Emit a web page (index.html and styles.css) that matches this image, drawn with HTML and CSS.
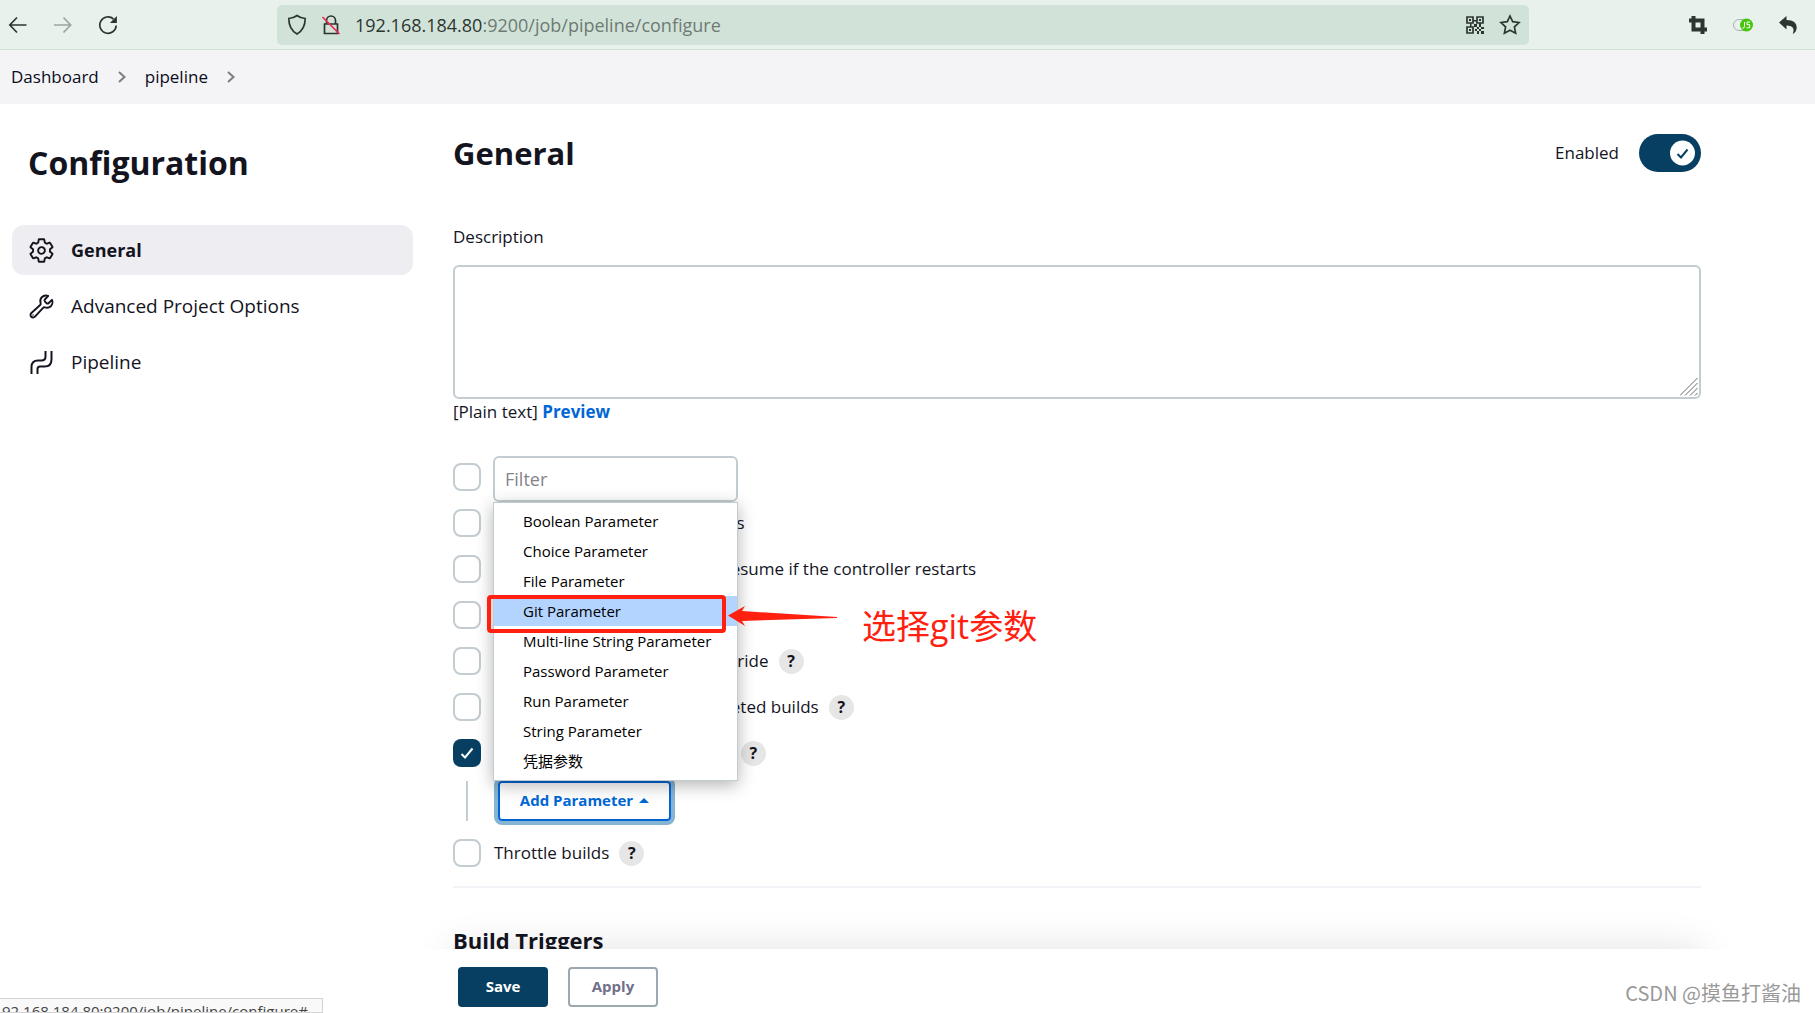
FILE: index.html
```html
<!DOCTYPE html>
<html lang="en">
<head>
<meta charset="utf-8">
<title>pipeline Config [Jenkins]</title>
<link rel="stylesheet" href="styles.css">
</head>
<body>
<div class="toolbar">
  <div class="tools nav-tools">
    <button type="button" aria-label="Back"><svg width="20" height="20" viewBox="0 0 20 20"><path d="M18.500 10H2M9 2.500 1.800 10 9 17.500"/></svg></button>
    <button type="button" aria-label="Forward" class="dim"><svg width="20" height="20" viewBox="0 0 20 20"><path d="M1 10h16.500M10.500 2.500 17.700 10l-7.200 7.500"/></svg></button>
    <button type="button" aria-label="Reload"><svg width="20" height="20" viewBox="0 0 20 20"><path d="M15.500 4A8.200 8.200 0 1 0 18.200 10.500"/><path class="solid" d="M18.900 1v7h-7z"/></svg></button>
  </div>
  <div class="address">
    <svg width="20" height="22" viewBox="0 0 20 22"><path d="M10 1.500c2.500 2 5.200 2.800 8.200 3 0 7-2.400 12.200-8.200 15.500C4.200 16.700 1.800 11.500 1.800 4.500c3-.2 5.700-1 8.200-3z"/></svg>
    <svg width="20" height="22" viewBox="0 0 20 22"><path d="M5.500 10V6.500a4.500 4.500 0 0 1 9 0V10M3.500 10h13v9.500h-13z"/><path class="slash" d="M1.500 3 18.500 20"/></svg>
    <p class="url"><span>192.168.184.80</span>:9200/job/pipeline/configure</p>
    <svg width="20" height="20" viewBox="0 0 20 20"><path d="M2 2h6v6H2zM12 2h6v6h-6zM2 12h6v6H2z"/><path class="solid" d="M4 4h2v2H4zM14 4h2v2h-2zM4 14h2v2H4zM8 5h4v1.500H8zM5 8h1.500v4H5zM9 9h3v3H9zM14 8h2v4h-2zM12 12h2v2h-2zM16 12h3v2h-3zM10 14h2v2h-2zM14 14h2v2h-2zM12 16h2v3h-2zM16 16h3v3h-3z"/></svg>
    <svg width="22" height="22" viewBox="0 0 22 22"><path d="m11 2 2.700 5.700 6.300.8-4.600 4.400 1.200 6.300-5.600-3-5.600 3 1.200-6.300L2 8.500l6.300-.8z"/></svg>
  </div>
  <div class="tools ext-tools">
    <button type="button" aria-label="Crop"><svg width="20" height="20" viewBox="0 0 20 20"><path class="heavy" d="M5.500 1v13.500H19M1 5.500h13.500V19"/></svg></button>
    <button type="button" aria-label="JavaScript switch"><svg width="22" height="20" viewBox="0 0 22 20"><path class="pill" d="M12 4.500H7a5.500 5.500 0 0 0 0 11h5"/><circle class="green" cx="14.500" cy="10" r="6.500"/><path class="js" d="M12.500 7v4.500q0 2-2.200 1.500M18 7h-3v2.700h2.700v3.100h-3.200"/></svg></button>
    <button type="button" aria-label="Undo"><svg width="20" height="20" viewBox="0 0 20 20"><path class="solid" d="M1 7.500 8.500 1v4C15.500 5 18.700 8 18.700 12.500c0 3-1.500 5.300-4 6.500 2-4.500.8-8.500-6.200-8.500v4z"/></svg></button>
  </div>
</div>

<nav class="crumbs" aria-label="Breadcrumb">
  <a href="#">Dashboard</a>
  <svg width="10" height="14" viewBox="0 0 10 14"><path d="m2 2 5.500 5L2 12"/></svg>
  <a href="#">pipeline</a>
  <svg width="10" height="14" viewBox="0 0 10 14"><path d="m2 2 5.500 5L2 12"/></svg>
</nav>

<div class="page">
  <aside class="side">
    <h1>Configuration</h1>
    <nav class="tasks">
      <a href="#" class="active"><svg width="27" height="27" viewBox="0 0 512 512"><path d="M262.290 192.310a64 64 0 1 0 57.400 57.400 64.130 64.130 0 0 0-57.400-57.400zM416.390 256a154.340 154.340 0 0 1-1.530 20.790l45.210 35.460a10.810 10.810 0 0 1 2.450 13.750l-42.770 74a10.810 10.810 0 0 1-13.140 4.590l-44.900-18.080a16.110 16.110 0 0 0-15.170 1.750A164.480 164.480 0 0 1 325 400.800a15.940 15.940 0 0 0-8.820 12.140l-6.730 47.890a11.080 11.080 0 0 1-10.680 9.170h-85.540a11.110 11.110 0 0 1-10.690-8.870l-6.720-47.820a16.070 16.070 0 0 0-9-12.220 155.300 155.300 0 0 1-21.460-12.570 16 16 0 0 0-15.110-1.710l-44.890 18.070a10.810 10.810 0 0 1-13.140-4.580l-42.770-74a10.800 10.800 0 0 1 2.450-13.750l38.210-30a16.050 16.050 0 0 0 6-14.080c-.36-4.170-.58-8.330-.58-12.500s.21-8.270.58-12.350a16 16 0 0 0-6.070-13.940l-38.190-30A10.810 10.810 0 0 1 49.480 186l42.770-74a10.810 10.810 0 0 1 13.140-4.590l44.900 18.080a16.110 16.110 0 0 0 15.170-1.750A164.480 164.480 0 0 1 187 111.200a15.940 15.940 0 0 0 8.820-12.140l6.730-47.890A11.080 11.080 0 0 1 213.230 42h85.540a11.110 11.110 0 0 1 10.690 8.870l6.720 47.820a16.070 16.070 0 0 0 9 12.220 155.300 155.300 0 0 1 21.460 12.570 16 16 0 0 0 15.110 1.710l44.890-18.070a10.810 10.810 0 0 1 13.140 4.580l42.770 74a10.800 10.800 0 0 1-2.450 13.750l-38.210 30a16.050 16.050 0 0 0-6.050 14.080c.33 4.140.55 8.300.55 12.470z"/></svg>General</a>
      <a href="#"><svg width="27" height="27" viewBox="0 0 512 512"><path d="M393.870 190a32.100 32.100 0 0 1-45.250 0l-26.570-26.570a32.090 32.090 0 0 1 0-45.260L382.190 58a1 1 0 0 0-.3-1.640c-38.820-16.640-89.150-8.160-121.110 23.570-30.580 30.350-32.320 76-21.120 115.840a31.930 31.930 0 0 1-9.060 32.080L64 380a48.170 48.170 0 1 0 68 68l153.860-167a31.930 31.930 0 0 1 31.600-9.130c39.540 10.590 84.540 8.600 114.720-21.190 32.490-32 39.500-88.560 23.750-120.930a1 1 0 0 0-1.600-.26z"/><circle class="dot" cx="96" cy="416" r="14"/></svg>Advanced Project Options</a>
      <a href="#"><svg width="27" height="27" viewBox="0 0 27 27"><path class="pipe" d="M3.500 25V18q0-6.500 6.500-6.500h3.500q4 0 4-4V2M9.500 25v-5q0-2.500 2.500-2.500h4.500q7 0 7-7V2"/></svg>Pipeline</a>
    </nav>
  </aside>

  <main class="content">
    <div class="pane">
      <header class="head">
        <h2>General</h2>
        <label class="switch">Enabled<input type="checkbox" checked></label>
      </header>
      <label class="caption" for="description">Description</label>
      <div class="area">
        <textarea id="description"></textarea>
        <svg class="grip" width="18" height="18" viewBox="0 0 18 18"><path d="M0 17.500 17.500 0M5 17.500 17.500 5M10 17.500l7.500-7.500M15 17.500l2.500-2.500"/></svg>
      </div>
      <p class="format">[Plain text] <a href="#">Preview</a></p>

      <div class="options">
        <div class="row"><input type="checkbox" id="o1"><label for="o1">Discard old builds</label></div>
        <div class="row"><input type="checkbox" id="o2"><label for="o2">Do not allow concurrent builds</label></div>
        <div class="row"><input type="checkbox" id="o3"><label for="o3">Do not allow the pipeline to resume if the controller restarts</label></div>
        <div class="row"><input type="checkbox" id="o4"><label for="o4">GitHub project</label></div>
        <div class="row"><input type="checkbox" id="o5"><label for="o5">Pipeline speed/durability override</label><button type="button" class="help">?</button></div>
        <div class="row"><input type="checkbox" id="o6"><label for="o6">Preserve stashes from completed builds</label><button type="button" class="help">?</button></div>
        <div class="row"><input type="checkbox" id="o7" checked><label for="o7">This project is parameterized</label><button type="button" class="help">?</button></div>
      </div>
      <div class="nested">
        <div class="adder">
          <button type="button" class="add">Add Parameter<svg width="10" height="5" viewBox="0 0 10 5"><path d="M0 5 5 0l5 5z"/></svg></button>
          <div class="popup">
            <input type="text" placeholder="Filter" aria-label="Filter">
            <ul class="menu">
              <li>Boolean Parameter</li>
              <li>Choice Parameter</li>
              <li>File Parameter</li>
              <li class="picked">Git Parameter
                <span class="frame"></span>
                <svg class="arrow" width="110" height="20" viewBox="0 0 110 20"><path d="M0 9.500 17 0l-3 5 95 6v1l-95 3 3 5z"/></svg>
                <span class="note">选择git参数</span>
              </li>
              <li>Multi-line String Parameter</li>
              <li>Password Parameter</li>
              <li>Run Parameter</li>
              <li>String Parameter</li>
              <li>凭据参数</li>
            </ul>
          </div>
        </div>
      </div>
      <div class="row"><input type="checkbox" id="o8"><label for="o8">Throttle builds</label><button type="button" class="help">?</button></div>
      <h3>Build Triggers</h3>
    </div>
    <footer class="actions">
      <button type="button" class="save">Save</button>
      <button type="button" class="apply">Apply</button>
    </footer>
  </main>
</div>
<div class="status">92.168.184.80:9200/job/pipeline/configure#</div>
<div class="credit">CSDN @摸鱼打酱油</div>
</body>
</html>
```
FILE: styles.css
```css
* { box-sizing: border-box; }
body {
  margin: 0;
  height: 100vh;
  display: flex;
  flex-direction: column;
  overflow: hidden;
  position: relative;
  background: #fff;
  color: #14141f;
  font: 17px/24px "Open Sans", "Noto Sans CJK SC", sans-serif;
}
h1, h2, h3, p, ul { margin: 0; padding: 0; }
button, input, textarea { font: inherit; color: inherit; }
button { padding: 0; border: 0; background: none; }
a { color: inherit; text-decoration: none; }
svg { flex: none; fill: none; stroke: currentColor; stroke-width: 2; }

/* browser toolbar */
.toolbar {
  flex: none;
  display: flex;
  align-items: center;
  height: 50px;
  background: #e8f1ec;
  border-bottom: 1px solid #cfe1d7;
  color: #2c3630;
}
.tools { display: flex; gap: 25px; }
.tools button { display: flex; }
.toolbar svg { stroke-width: 1.7; }
.toolbar .heavy { stroke-width: 4; }
.nav-tools { width: 277px; padding-left: 8px; }
.dim { opacity: .4; }
.ext-tools { width: 286px; padding-right: 17px; gap: 24px; justify-content: flex-end; }
.address {
  flex: 1;
  display: flex;
  align-items: center;
  gap: 14px;
  height: 40px;
  padding: 0 8px 0 10px;
  border-radius: 5px;
  background: #d1e3d9;
}
.url { flex: 1; color: #6e7a73; font-size: 18px; }
.url span { color: #2c3630; }
.solid { fill: currentColor; stroke: none; }
.slash { stroke: #f0284f; }
.pill { stroke: #a9b3ad; stroke-width: 1; }
.green { fill: #46c60a; stroke: none; }
.js { stroke: #fff; stroke-width: 1; }

/* breadcrumbs */
.crumbs {
  flex: none;
  display: flex;
  align-items: center;
  height: 54px;
  padding-left: 11px;
  gap: 18px;
  background: #f4f4f7;
  color: #0c0c1c;
}
.crumbs svg { color: #7d7d86; }

/* layout */
.page { flex: 1; display: flex; min-height: 0; }
.side { width: 413px; padding: 39px 0 0 12px; }
h1, h2 { font-size: 32px; line-height: 40px; font-weight: 700; }
h1 { padding-left: 16px; }
h2 { font-size: 31px; }
.tasks { display: flex; flex-direction: column; gap: 6px; margin-top: 42px; font-size: 19px; }
.tasks a {
  display: flex;
  align-items: center;
  gap: 16px;
  height: 50px;
  padding-left: 16px;
  border-radius: 12px;
}
.tasks .active { background: #eeedf2; font-size: 18px; font-weight: 700; }
.tasks path { stroke-width: 36; }
.tasks .pipe { stroke-width: 2; }
.tasks .dot { fill: currentColor; stroke: none; }

.content { flex: 1; display: flex; flex-direction: column; min-width: 0; }
.pane {
  flex: 1;
  min-height: 0;
  position: relative;
  overflow: hidden;
  padding: 30px 114px 0 40px;
}
.pane::after {
  content: "";
  position: absolute;
  top: 100%;
  left: 40px;
  right: 114px;
  height: 80px;
  box-shadow: 0 0 40px rgba(0, 0, 0, .12);
}
.head { display: flex; justify-content: space-between; align-items: center; height: 38px; }
.switch { display: flex; align-items: center; gap: 20px; }
.switch input {
  appearance: none;
  width: 62px;
  height: 38px;
  margin: 0;
  border-radius: 19px;
  background: #073f63 url("data:image/svg+xml,%3Csvg xmlns='http://www.w3.org/2000/svg' width='62' height='38'%3E%3Ccircle cx='43.500' cy='19' r='12.500' fill='white'/%3E%3Cpath d='m38.500 20 3.500 3.500 6.500-8' fill='none' stroke='%23073f63' stroke-width='2'/%3E%3C/svg%3E");
}
.caption { display: block; margin: 53px 0 16px; }
.area { position: relative; display: flex; }
textarea {
  width: 100%;
  height: 134px;
  border: 2px solid #c3ccd1;
  border-radius: 6px;
  resize: none;
}
.grip { position: absolute; right: 3px; bottom: 3px; stroke: #6b6b6b; stroke-width: 1; }
.format { margin-top: 1px; }
.format a { color: #0066d6; font-weight: 700; }

.options { display: flex; flex-direction: column; gap: 18px; margin-top: 39px; }
.options label { padding-left: 7px; }
.row { display: flex; align-items: center; height: 28px; }
.row input {
  appearance: none;
  width: 28px;
  height: 28px;
  margin: 0 13px 0 0;
  border: 2px solid #c3ccd1;
  border-radius: 8px;
}
.row input:checked {
  border: 0;
  background: #073f63 url("data:image/svg+xml,%3Csvg xmlns='http://www.w3.org/2000/svg' width='28' height='28'%3E%3Cpath d='m8.500 15 3.500 3.500L19.500 9.500' fill='none' stroke='white' stroke-width='2'/%3E%3C/svg%3E");
}
.help {
  width: 25px;
  height: 25px;
  margin-left: 10px;
  border-radius: 50%;
  background: #e6e6e6;
  font-size: 16px;
  line-height: 24px;
  font-weight: 700;
}

/* nested parameter list */
.nested { display: flex; margin: 14px 0 18px 13px; border-left: 2px solid #c3ccd1; }
.adder { position: relative; padding-left: 30px; }
.add {
  display: flex;
  align-items: center;
  justify-content: center;
  gap: 6px;
  width: 173px;
  height: 40px;
  padding-bottom: 2px;
  border: 2px solid #0066d6;
  border-radius: 4px;
  box-shadow: 0 0 0 4px #86b4d3;
  color: #0066d6;
  font-size: 15px;
  font-weight: 700;
}
.add path { fill: currentColor; stroke: none; }
.popup { position: absolute; left: 25px; bottom: 100%; width: 245px; }
.popup input {
  display: block;
  width: 100%;
  height: 46px;
  padding: 0 10px;
  border: 2px solid #c3ccd1;
  border-radius: 6px;
  background: #fff;
  font-size: 18px;
}
.popup input::placeholder { color: #83838c; }
.menu {
  padding: 3px 0 4px;
  border: 1px solid #c3ccd1;
  background: #fff;
  box-shadow: 0 4px 16px rgba(0, 0, 0, .3);
  list-style: none;
  color: #000;
  font-size: 15px;
  line-height: 30px;
}
.menu li { padding-left: 29px; white-space: nowrap; }
.menu .picked { position: relative; background: #b3d4ff; }

/* annotation drawn over the menu */
.frame {
  position: absolute;
  left: -7px;
  top: -1px;
  width: 239px;
  height: 38px;
  border: 4px solid #ff2010;
  border-radius: 4px;
}
.arrow { position: absolute; left: 234px; top: 10px; fill: #ff2010; stroke: none; }
.note {
  position: absolute;
  left: 368px;
  top: 10px;
  color: #ff2010;
  font-size: 34px;
  line-height: 40px;
}

h3 {
  margin-top: 19px;
  padding-top: 37px;
  border-top: 2px solid #f2f2f7;
  font-size: 22px;
  line-height: 30px;
}

/* bottom bar */
.actions { flex: none; display: flex; gap: 20px; height: 64px; padding: 18px 0 0 45px; background: #fff; }
.actions button { width: 90px; height: 40px; padding-bottom: 2px; border-radius: 4px; font-size: 15px; font-weight: 700; }
.actions .save { background: #073f63; color: #fff; }
.actions .apply { border: 2px solid #9ca8b0; color: #71718a; }

/* link address bubble */
.status {
  position: absolute;
  left: 0;
  bottom: 0;
  width: 323px;
  height: 15px;
  padding-left: 2px;
  border: 1px solid #d4d4d4;
  border-left: 0;
  background: #f9f9f9;
  color: #444;
  font-size: 15px;
  overflow: hidden;
}
.credit { position: absolute; right: 14px; bottom: 8px; color: #999; font-size: 20px; font-family: "Noto Sans CJK SC", sans-serif; }
```
